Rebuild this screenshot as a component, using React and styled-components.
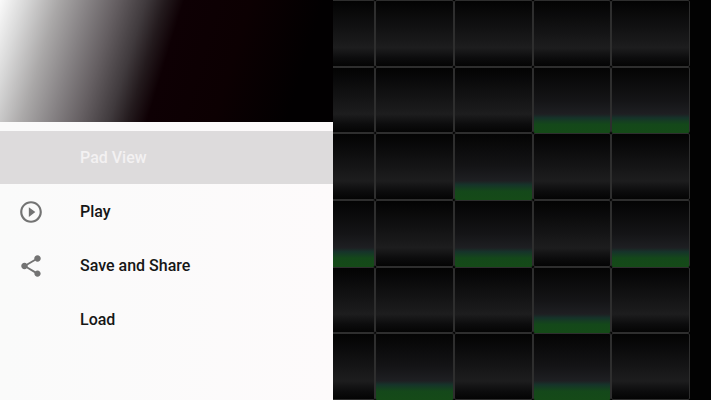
import React from 'react'
import styled, { createGlobalStyle } from 'styled-components'
import { MdPlayCircleOutline, MdShare } from 'react-icons/md'

const menu = [
  { label: 'Pad View', active: true },
  { label: 'Play', icon: <MdPlayCircleOutline /> },
  { label: 'Save and Share', icon: <MdShare /> },
  { label: 'Load' },
]

// one row per track, 1 = lit pad
const pattern = [
  [0, 0, 0, 0, 0],
  [0, 0, 0, 1, 1],
  [0, 0, 1, 0, 0],
  [1, 0, 1, 0, 1],
  [0, 0, 0, 1, 0],
  [0, 1, 0, 1, 0],
]

const App = () => {
  return (
    <Layout>
      <GlobalStyle />
      <Drawer>
        <Banner />
        <Menu>
          {menu.map((item) => (
            <li key={item.label}>
              <MenuItem type="button" $active={item.active}>
                <IconSlot>{item.icon}</IconSlot>
                {item.label}
              </MenuItem>
            </li>
          ))}
        </Menu>
      </Drawer>
      <PadGrid>
        {pattern.map((row, r) =>
          row.map((lit, c) => (
            <Pad
              key={`${r}-${c}`}
              type="button"
              aria-label={`Pad ${r + 1}-${c + 1}`}
              aria-pressed={!!lit}
              $lit={!!lit}
              $cut={c === 0}
            />
          ))
        )}
      </PadGrid>
    </Layout>
  )
}

const GlobalStyle = createGlobalStyle`
  * {
    margin: 0;
    padding: 0;
    box-sizing: border-box;
  }
  body {
    background: #020202;
    font-family: Roboto, sans-serif;
  }
`

const Layout = styled.div`
  display: grid;
  grid-template-columns: 333fr 378fr;
  min-height: 100vh;
`

const Drawer = styled.nav`
  background: linear-gradient(90deg, #fafafa, #fdfafb);
`

const Banner = styled.div`
  height: 122px;
  background: linear-gradient(
    107deg,
    #fafafa 0px,
    #d9d9d9 24px,
    #aaa8a8 56px,
    #878385 84px,
    #655f62 112px,
    #403a3d 140px,
    #231a1d 158px,
    #0e0004 176px,
    #0c0002 240px,
    #020001 310px
  );
`

const Menu = styled.ul`
  display: grid;
  gap: 1px;
  list-style: none;
  padding: 9px 0;
`

const MenuItem = styled.button`
  display: flex;
  align-items: center;
  width: 100%;
  height: 53px;
  padding: 1px 0 0 18px;
  border: none;
  background: ${({ $active }) => ($active ? '#dddbdc' : 'transparent')};
  color: ${({ $active }) => ($active ? '#f3f1f2' : '#161616')};
  font-family: inherit;
  font-size: 16px;
  font-weight: 500;
  line-height: 20px;
  text-align: left;
  cursor: pointer;
`

const IconSlot = styled.span`
  display: flex;
  flex: 0 0 62px;
  color: #737373;
  svg {
    width: 26px;
    height: 26px;
  }
`

const PadGrid = styled.main`
  display: grid;
  grid-template-columns: 42px repeat(4, 1fr);
  grid-template-rows: repeat(6, 1fr);
  padding-right: 21px;
`

const Pad = styled.button`
  border: 1px solid #2e2e2e;
  border-left-width: ${({ $cut }) => ($cut ? '0' : '1px')};
  border-bottom-color: ${({ $lit }) => ($lit ? '#154a18' : '#2e2e2e')};
  border-radius: ${({ $cut }) => ($cut ? '0 2px 2px 0' : '2px')};
  background: ${({ $lit }) =>
    $lit
      ? 'linear-gradient(#040404, #141416 50%, #1e1f22 72%, #16332a 78%, #14481a 88%, #154a18)'
      : 'linear-gradient(#030303, #111112 40%, #1d1d1e 72%, #0c0c0d 88%, #040404)'};
  cursor: pointer;
`

export default App
